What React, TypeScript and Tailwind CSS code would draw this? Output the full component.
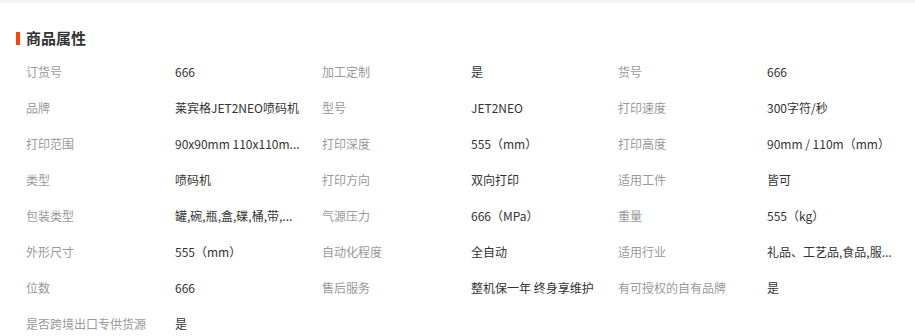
import React from 'react'

type Attr = [string, string]

// long values are shortened the way the page shows them
const attrs: Attr[] = [
  ['订货号', '666'],
  ['加工定制', '是'],
  ['货号', '666'],
  ['品牌', '莱宾格JET2NEO喷码机'],
  ['型号', 'JET2NEO'],
  ['打印速度', '300字符/秒'],
  ['打印范围', '90x90mm 110x110m...'],
  ['打印深度', '555（mm）'],
  ['打印高度', '90mm / 110m（mm）'],
  ['类型', '喷码机'],
  ['打印方向', '双向打印'],
  ['适用工件', '皆可'],
  ['包装类型', '罐,碗,瓶,盒,碟,桶,带,...'],
  ['气源压力', '666（MPa）'],
  ['重量', '555（kg）'],
  ['外形尺寸', '555（mm）'],
  ['自动化程度', '全自动'],
  ['适用行业', '礼品、工艺品,食品,服...'],
  ['位数', '666'],
  ['售后服务', '整机保一年 终身享维护'],
  ['有可授权的自有品牌', '是'],
  ['是否跨境出口专供货源', '是'],
]

export default function App() {
  return (
    <div
      className="h-[336px] w-[915px] overflow-hidden border-t-[3px] border-[#f2f2f2] bg-white text-[12px] leading-[20px]"
      style={{ fontFamily: '"Microsoft YaHei", "Noto Sans CJK SC", "Noto Sans", sans-serif' }}
    >
      <div className="ml-4 mt-[25px] flex items-center gap-[6px]">
        <span className="h-[13px] w-[4px] bg-[#ff4400]" />
        <h2 className="text-[15px] font-bold leading-[20px] text-[#333]">商品属性</h2>
      </div>
      <div className="ml-4 mt-[6px] grid w-[888px] grid-cols-3">
        {attrs.map(([label, value]) => (
          <div key={label} className="flex h-[36px] items-center pl-[10px]">
            <span className="w-[149px] shrink-0 whitespace-nowrap pr-2 text-[#999]">{label}</span>
            <span className="whitespace-nowrap text-[#333]">{value}</span>
          </div>
        ))}
      </div>
    </div>
  )
}
